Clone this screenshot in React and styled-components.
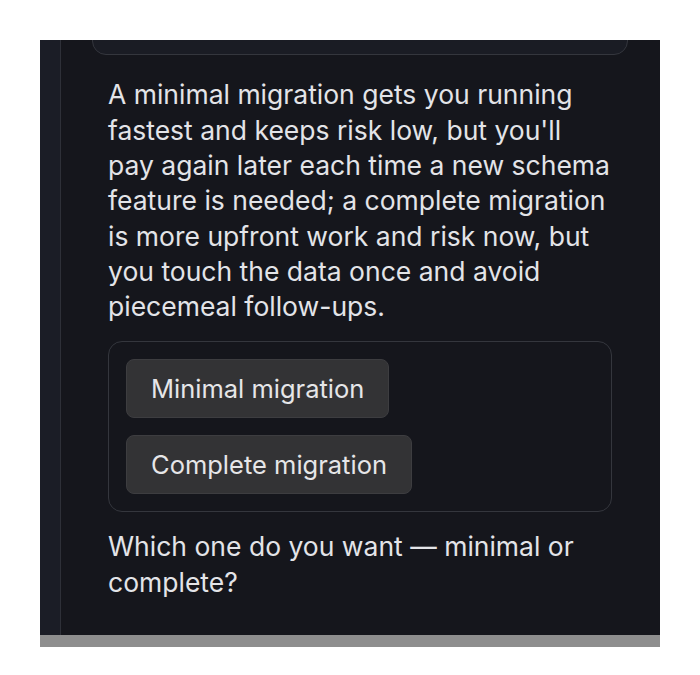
import React from 'react';
import styled, { createGlobalStyle } from 'styled-components';

const GlobalStyle = createGlobalStyle`
  html, body {
    margin: 0;
    padding: 0;
    background: #ffffff;
  }
  body {
    font-family: Inter, "Noto Sans", "Liberation Sans", sans-serif;
  }
`;

const Frame = styled.div`
  margin: 40px 40px 0 40px;
  width: 620px;
  height: 607px;
  display: flex;
  flex-direction: column;
  background: #15161c;
  overflow: hidden;
`;

const Body = styled.div`
  flex: 1;
  display: flex;
  min-height: 0;
`;

const Rail = styled.div`
  width: 20px;
  flex-shrink: 0;
  background: #1b1d26;
  border-right: 1px solid #2e3038;
`;

const Thread = styled.div`
  flex: 1;
  display: flex;
  flex-direction: column;
  justify-content: flex-end;
  overflow: hidden;
  padding: 0 48px 35px 47px;
`;

const PrevCard = styled.div`
  flex-shrink: 0;
  height: 120px;
  margin: 0 -16px 22px -16px;
  background: #1a1c24;
  border: 1px solid #34363d;
  border-radius: 14px;
`;

const Text = styled.p`
  margin: 0;
  color: #e3e4e8;
  font-size: 26.5px;
  line-height: 35.3px;
`;

const Choices = styled.div`
  margin: 17px 0;
  padding: 17px;
  border: 1px solid #34363d;
  border-radius: 14px;
  display: flex;
  flex-direction: column;
  align-items: flex-start;
  gap: 17px;
`;

const ChoiceButton = styled.button`
  font-family: inherit;
  font-size: 25.5px;
  line-height: 35px;
  color: #e6e6e8;
  background: #333335;
  border: 1px solid #3d3d40;
  border-radius: 8px;
  padding: 11px 24px;
  cursor: pointer;
`;

const BottomBar = styled.div`
  height: 12px;
  flex-shrink: 0;
  background: #8e8e8e;
`;

export default function App() {
  return (
    <>
      <GlobalStyle />
      <Frame>
        <Body>
          <Rail />
          <Thread>
            <PrevCard />
            <Text>
              A minimal migration gets you running fastest and keeps risk low, but you'll pay
              again later each time a new schema feature is needed; a complete migration is
              more upfront work and risk now, but you touch the data once and avoid piecemeal
              follow-ups.
            </Text>
            <Choices>
              <ChoiceButton>Minimal migration</ChoiceButton>
              <ChoiceButton>Complete migration</ChoiceButton>
            </Choices>
            <Text>Which one do you want — minimal or complete?</Text>
          </Thread>
        </Body>
        <BottomBar />
      </Frame>
    </>
  );
}
